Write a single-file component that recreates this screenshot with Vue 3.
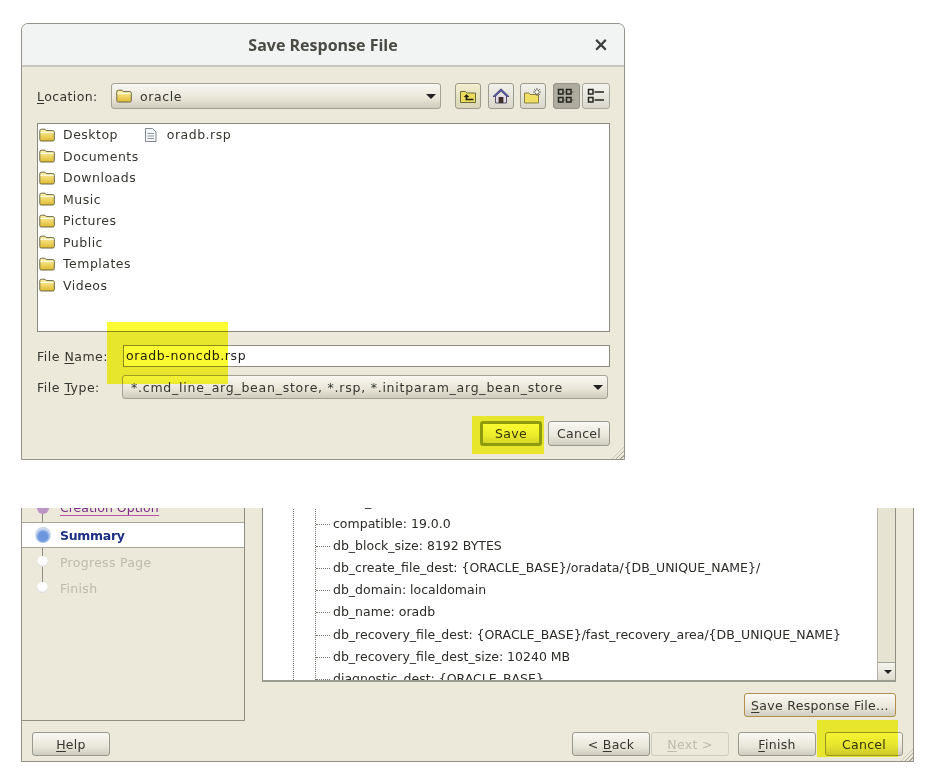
<script setup>
const folders = ['Desktop', 'Documents', 'Downloads', 'Music', 'Pictures', 'Public', 'Templates', 'Videos']
const params = [
  'audit_trail: db',
  'compatible: 19.0.0',
  'db_block_size: 8192 BYTES',
  'db_create_file_dest: {ORACLE_BASE}/oradata/{DB_UNIQUE_NAME}/',
  'db_domain: localdomain',
  'db_name: oradb',
  'db_recovery_file_dest: {ORACLE_BASE}/fast_recovery_area/{DB_UNIQUE_NAME}',
  'db_recovery_file_dest_size: 10240 MB',
  'diagnostic_dest: {ORACLE_BASE}'
]
</script>

<template>
  <div class="page">
    <svg width="0" height="0" class="defs" aria-hidden="true">
      <defs>
        <linearGradient id="fg" x1="0" y1="0" x2="0" y2="1">
          <stop offset="0" stop-color="#fff4a8" />
          <stop offset="1" stop-color="#dfba2e" />
        </linearGradient>
        <symbol id="folder" viewBox="0 0 16 14">
          <path d="M.8 3 Q.8 1.2 2.4 1.2 H6 L7.2 2.6 H13.8 Q15.3 2.6 15.3 4.2 V11.6 Q15.3 13 13.8 13 H2.3 Q.8 13 .8 11.6 Z" fill="url(#fg)" stroke="#6b6648" stroke-width="1" />
          <path d="M1.5 4.4 H14.6" stroke="#fffbe0" stroke-width="1.2" fill="none" />
        </symbol>
      </defs>
    </svg>

    <section class="dialog">
      <header class="title">
        <span class="title-text">Save Response File</span>
        <span class="close">×</span>
      </header>
      <div class="dlg-body">
        <div class="loc-row">
          <span class="loc-label"><u>L</u>ocation:</span>
          <div class="combo loc-combo">
            <svg class="ico16" width="16" height="14"><use href="#folder" /></svg>
            <span class="combo-text">oracle</span>
            <span class="caret"></span>
          </div>
          <div class="tools">
            <button class="tool tool-up">
              <svg width="18" height="16" viewBox="0 0 18 16">
                <path d="M1.5 3.5 H6.5 L7.8 5 H16.5 V14.5 H1.5 Z" fill="#ebdc5e" stroke="#6f6a3c" />
                <path d="M7.5 6.2 L4.6 9 H6.6 V12.2 H14.5 V10.8 H8.4 V9 H10.4 Z" fill="#22220e" />
              </svg>
            </button>
            <button class="tool">
              <svg width="18" height="18" viewBox="0 0 18 18">
                <path d="M3.5 8.5 V16 H14.5 V8.5" fill="#e6dbe9" stroke="#57506e" stroke-width="1" />
                <path d="M1 9.5 L9 1.8 L17 9.5 L14.8 9.5 L9 4.2 L3.2 9.5 Z" fill="#5560ad" stroke="#34305c" stroke-width=".7" />
                <rect x="6.6" y="10" width="4.8" height="6" fill="#3e3029" />
              </svg>
            </button>
            <button class="tool">
              <svg width="20" height="18" viewBox="0 0 20 18">
                <path d="M1.5 6 H6 L7.2 7.5 H15.5 V16 H1.5 Z" fill="#f0de62" stroke="#8b8048" />
                <path d="M14 1 V9 M10 5 H18 M11.2 2.2 L16.8 7.8 M16.8 2.2 L11.2 7.8" stroke="#68685c" stroke-width="1" />
                <circle cx="14" cy="5" r="1.6" fill="#fff" />
              </svg>
            </button>
            <div class="toggle">
              <button class="tog tog-on">
                <svg width="20" height="20" viewBox="0 0 20 20">
                  <g fill="none" stroke="#24241f" stroke-width="1.5">
                    <rect x="2.5" y="3.5" width="4.5" height="4.5" />
                    <rect x="10.5" y="3.5" width="4.5" height="4.5" />
                    <rect x="2.5" y="11.5" width="4.5" height="4.5" />
                    <rect x="10.5" y="11.5" width="4.5" height="4.5" />
                  </g>
                  <path d="M8 6H9.5M16 6H17.5M8 14H9.5M16 14H17.5" stroke="#55554c" />
                </svg>
              </button>
              <button class="tog">
                <svg width="20" height="20" viewBox="0 0 20 20">
                  <g fill="none" stroke="#24241f" stroke-width="1.5">
                    <rect x="2.5" y="3.5" width="4.5" height="4.5" />
                    <rect x="2.5" y="11.5" width="4.5" height="4.5" />
                  </g>
                  <path d="M8.5 6H18M8.5 14H18" stroke="#24241f" stroke-width="1.4" />
                </svg>
              </button>
            </div>
          </div>
        </div>

        <div class="file-list">
          <div class="col">
            <div v-for="f in folders" :key="f" class="item">
              <svg class="ico16" width="16" height="14"><use href="#folder" /></svg>
              <span>{{ f }}</span>
            </div>
          </div>
          <div class="col">
            <div class="item">
              <svg class="ico16" width="16" height="16" viewBox="0 0 16 16">
                <path d="M2.5 1.5 H9.5 L13 5 V14.5 H2.5 Z" fill="#f3f6f7" stroke="#7f898d" />
                <path d="M4.5 6.5H11M4.5 9H11M4.5 11.5H11" stroke="#8f989c" />
              </svg>
              <span>oradb.rsp</span>
            </div>
          </div>
        </div>

        <div class="field name-row">
          <span class="f-label">File <u>N</u>ame:</span>
          <div class="name-input">oradb-noncdb.rsp</div>
        </div>
        <div class="field type-row">
          <span class="f-label type-label">File <u>T</u>ype:</span>
          <div class="combo type-combo">
            <span class="combo-text">*.cmd_line_arg_bean_store, *.rsp, *.initparam_arg_bean_store</span>
            <span class="caret"></span>
          </div>
        </div>

        <div class="dlg-foot">
          <button class="btn btn-default">Save</button>
          <button class="btn">Cancel</button>
        </div>
      </div>
      <span class="grip"></span>
      <span class="mark mark-name"></span>
      <span class="mark mark-save"></span>
    </section>

    <section class="wizard">
      <div class="wiz-main">
        <nav class="steps">
          <span class="rail"></span>
          <div class="step step-link"><i class="dot dot-done"></i><span>Creation Option</span></div>
          <div class="step step-cur"><i class="dot dot-cur"></i><span>Summary</span></div>
          <div class="step step-off"><i class="dot dot-off"></i><span>Progress Page</span></div>
          <div class="step step-off"><i class="dot dot-off"></i><span>Finish</span></div>
        </nav>
        <div class="wiz-right">
          <div class="tree-panel">
            <div class="tree-view">
              <div class="tree-outer">
                <div class="tree-inner">
                  <div v-for="p in params" :key="p" class="tree-row">{{ p }}</div>
                </div>
              </div>
            </div>
            <div class="scrollbar">
              <div class="sb-track"></div>
              <div class="sb-btn"><span class="caret caret-sm"></span></div>
            </div>
          </div>
          <div class="save-row">
            <button class="btn btn-save"><u>S</u>ave Response File...</button>
          </div>
        </div>
      </div>
      <footer class="wiz-foot">
        <button class="btn wbtn"><u>H</u>elp</button>
        <span class="spacer"></span>
        <button class="btn wbtn">&lt; <u>B</u>ack</button>
        <button class="btn wbtn btn-off"><u>N</u>ext &gt;</button>
        <button class="btn wbtn gap-l"><u>F</u>inish</button>
        <button class="btn wbtn gap-l">Cancel</button>
      </footer>
      <span class="grip"></span>
      <span class="mark mark-cancel"></span>
    </section>
  </div>
</template>

<style>
html, body { margin: 0; background: #fff; }
</style>

<style scoped>
.page {
  width: 930px;
  height: 780px;
  overflow: hidden;
  box-sizing: border-box;
  padding: 23px 0 0 21px;
  font: 12.5px "DejaVu Sans", sans-serif;
  color: #35352f;
  background: #fff;
}
.defs { position: absolute; }
u { text-underline-offset: 2px; }
button { font: inherit; color: inherit; padding: 0; }

.dialog {
  position: relative;
  box-sizing: border-box;
  width: 604px;
  height: 437px;
  background: #ecE9da;
  border: 1px solid #94928a;
  border-top-left-radius: 7px;
  border-top-right-radius: 7px;
}
.title {
  box-sizing: border-box;
  height: 43px;
  display: flex;
  align-items: center;
  justify-content: center;
  position: relative;
  background: #f2f3f3;
  border-bottom: 2px solid #c9c8bd;
  border-top-left-radius: 6px;
  border-top-right-radius: 6px;
}
.title-text { font-weight: 700; font-size: 16px; font-family: "Open Sans", "DejaVu Sans", sans-serif; color: #4a4a45; }
.close {
  position: absolute;
  right: 15px;
  top: 9px;
  font-size: 19px;
  font-weight: 700;
  color: #3d3d3d;
}
.dlg-body { padding: 16px 14px 0 15px; }
.loc-row { display: flex; align-items: center; height: 26px; }
.loc-label { width: 74px; flex: none; letter-spacing: .4px; }
.combo {
  box-sizing: border-box;
  display: flex;
  align-items: center;
  position: relative;
  background: linear-gradient(#f8f7f1, #e9e6d8 60%, #cfccbd);
  border: 1px solid #a4a296;
  border-radius: 3px;
}
.loc-combo { width: 330px; height: 26px; padding-left: 4px; }
.ico16 { flex: none; }
.combo-text { margin-left: 8px; white-space: nowrap; letter-spacing: .6px; }
.caret {
  position: absolute;
  right: 4px;
  top: 50%;
  margin-top: -2px;
  border-style: solid;
  border-width: 5px 5px 0;
  border-color: #222 transparent transparent;
}
.tools { display: flex; align-items: center; margin-left: 14px; gap: 6.5px; }
.tool {
  box-sizing: border-box;
  width: 26px;
  height: 26px;
  display: flex;
  align-items: center;
  justify-content: center;
  background: linear-gradient(#f2f1ea, #d9d7ca);
  border: 1px solid #9c9b90;
  border-radius: 3px;
}
.tool-up { background: linear-gradient(#f0eecb, #d9d6b8); }
.toggle { display: flex; gap: 2px; }
.tog {
  box-sizing: border-box;
  width: 27.5px;
  height: 26px;
  display: flex;
  align-items: center;
  justify-content: center;
  background: linear-gradient(#f5f5f0, #d8d6c9);
  border: 1px solid #a9a89e;
  border-radius: 3px;
}
.tog-on { background: #adac9f; border-color: #94938a; }

.file-list {
  box-sizing: border-box;
  display: flex;
  gap: 4px;
  margin-top: 14px;
  width: 573px;
  height: 209px;
  padding-left: 1px;
  background: #fff;
  border: 1px solid #8b8a7e;
}
.item { display: flex; align-items: center; gap: 8px; height: 21.5px; white-space: nowrap; letter-spacing: .5px; }

.field { display: flex; align-items: center; }
.f-label { width: 86px; flex: none; letter-spacing: .5px; }
.type-label { width: 85px; }
.name-row { margin-top: 13px; height: 22px; }
.name-input {
  box-sizing: border-box;
  width: 488px;
  height: 22px;
  line-height: 20px;
  padding-left: 2px;
  background: #fff;
  border: 1px solid #8d8c80;
  letter-spacing: .6px;
  color: #222;
}
.type-row { margin-top: 8px; height: 24px; }
.type-combo { width: 486px; height: 24px; }
.type-combo .combo-text { letter-spacing: .76px; }

.dlg-foot { display: flex; justify-content: flex-end; gap: 6px; margin-top: 22px; width: 573px; }
.dlg-foot .btn { height: 25px; }
.btn {
  box-sizing: border-box;
  width: 62px;
  height: 24px;
  background: linear-gradient(#f9f8f3, #e9e7da 60%, #cfcdc0);
  border: 1px solid #9a998e;
  border-radius: 3px;
  letter-spacing: .3px;
  white-space: nowrap;
}
.dlg-foot .btn-default {
  background: linear-gradient(#fffff0, #f0f0dc 60%, #d8d8be);
  border: 3px solid #8f9e3c;
}

.mark { position: absolute; background: #fbfb34; mix-blend-mode: multiply; pointer-events: none; }
.mark-name { left: 85px; top: 298px; width: 121px; height: 62px; }
.mark-save { left: 450px; top: 392px; width: 72px; height: 38px; }
.mark-cancel { left: 795px; top: 212px; width: 81px; height: 37px; }

.grip {
  position: absolute;
  right: 0;
  bottom: 0;
  width: 12px;
  height: 12px;
  background: repeating-linear-gradient(135deg, transparent 0 2px, #aaa99d 2px 3px);
  clip-path: polygon(100% 0, 100% 100%, 0 100%);
}

.wizard {
  position: relative;
  box-sizing: border-box;
  margin-top: 48px;
  width: 893px;
  height: 254px;
  background: #ecE9da;
  border: 1px solid #94928a;
  border-top: 0;
}
.wiz-main { display: flex; height: 213px; }
.steps {
  position: relative;
  box-sizing: border-box;
  width: 223px;
  height: 213px;
  flex: none;
  overflow: hidden;
  border-right: 1px solid #8f8e82;
  border-bottom: 1px solid #8f8e82;
}
.rail { position: absolute; left: 20px; top: 0; width: 1px; height: 80px; background: #8e8c84; }
.step {
  position: relative;
  display: flex;
  align-items: center;
  height: 26px;
  padding-left: 38px;
  white-space: nowrap;
}
.dot { position: absolute; border-radius: 50%; box-sizing: border-box; }
.step-link { margin-top: -13px; color: #7b2d8b; }
.step-link span { border-bottom: 1px solid #c04fa8; line-height: 15px; }
.dot-done { left: 15px; top: 7px; width: 12px; height: 12px; background: #bd95c6; }
.step-cur {
  box-sizing: border-box;
  margin-top: 1px;
  background: #fff;
  border-top: 1px solid #a8a69b;
  border-bottom: 1px solid #a8a69b;
  font-weight: 700;
  letter-spacing: -.3px;
  color: #1d2f86;
}
.dot-cur {
  left: 13px;
  top: 4px;
  width: 16px;
  height: 16px;
  background: radial-gradient(circle at 50% 58%, #6d97dc 0 38%, #d3e0f3 62%, #8fa7cb);
}
.step-off { color: #bdbaae; letter-spacing: .3px; }
.step-off:nth-child(4) { margin-top: 1px; }
.dot-off {
  left: 15px;
  top: 7px;
  width: 11px;
  height: 11px;
  background: radial-gradient(circle at 50% 35%, #fff 0 50%, #bcbbbb);
}

.wiz-right { margin-left: 17px; width: 634px; flex: none; }
.tree-panel {
  box-sizing: border-box;
  display: flex;
  height: 174px;
  background: #fff;
  border-left: 1px solid #8f8e82;
  border-right: 1px solid #8f8e82;
  border-bottom: 2px solid #9c9b8f;
}
.tree-view { flex: 1; overflow: hidden; min-width: 0; }
.tree-outer { margin: -17px 0 0 30px; border-left: 1px dotted #77776e; }
.tree-inner { margin-left: 21px; border-left: 1px dotted #77776e; }
.tree-row {
  position: relative;
  height: 22.1px;
  line-height: 22px;
  padding-left: 17px;
  white-space: nowrap;
  color: #2b2b27;
}
.tree-row::before {
  content: "";
  position: absolute;
  left: 0;
  top: 11px;
  width: 14px;
  border-top: 1px dotted #77776e;
}
.scrollbar { width: 17px; flex: none; display: flex; flex-direction: column; border-left: 1px solid #b6b4a8; }
.sb-track { flex: 1; background: #e6e3d3; }
.sb-btn { position: relative; height: 17px; background: linear-gradient(#f5f4ee, #dddbce); border-top: 1px solid #a3a297; }
.caret-sm { right: 3px; margin-top: -2px; border-width: 4px 4px 0; }

.save-row { display: flex; justify-content: flex-end; margin-top: 11px; }
.btn-save { width: 152px; height: 24px; border-color: #b28d4b; letter-spacing: .3px; }

.wiz-foot { display: flex; align-items: flex-start; padding: 11px 10px 0 10px; }
.spacer { flex: 1; }
.wbtn { width: 78px; height: 24px; }
.btn-off { color: #bdbaae; background: #ecE9da; border-color: #cfcdc1; margin-left: 1px; }
.gap-l { margin-left: 9px; }
</style>
